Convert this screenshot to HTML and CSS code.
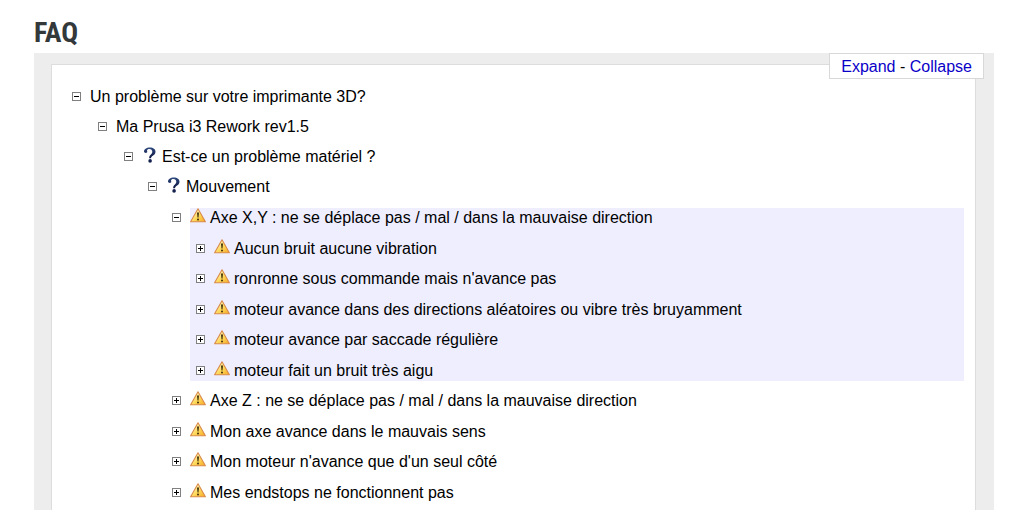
FILE: index.html
```html
<!DOCTYPE html>
<html lang="fr">
<head>
    <meta charset="UTF-8">
    <meta name="viewport" content="width=device-width, initial-scale=1.0">
    <title>FAQ</title>
    <link rel="stylesheet" href="styles.css">
</head>
<body>
    <!-- Shared icons -->
    <svg class="sprite" aria-hidden="true">
        <defs>
            <linearGradient id="amber" x1="0" y1="0" x2="1" y2="1">
                <stop offset="0.2" stop-color="#fff8c0"/>
                <stop offset="0.55" stop-color="#ffd95a"/>
                <stop offset="1" stop-color="#f5a623"/>
            </linearGradient>
            <linearGradient id="navy" x1="0" y1="0" x2="0" y2="1">
                <stop offset="0" stop-color="#2f4a80"/>
                <stop offset="1" stop-color="#0c1640"/>
            </linearGradient>
        </defs>
        <symbol id="warning" viewBox="0 0 16 16">
            <path d="M8 .8 15.4 13.8H.6Z" fill="url(#amber)" stroke="#d98a4a" stroke-width="1.1" stroke-linejoin="round"/>
            <path d="M7 4.6h2l-.5 5h-1z" fill="#40300c"/>
            <circle cx="8" cy="11.6" r="1" fill="#40300c"/>
        </symbol>
        <symbol id="question" viewBox="0 0 16 16">
            <path d="M2 4.6C2 2 4.4.4 7.8.4c3.6 0 5.7 1.7 5.7 4.4 0 2-1.3 3-2.7 4-1.2.8-1.7 1.4-1.8 2.4H7.2c-.1-1.8.6-2.8 1.7-3.8.9-.8 1.4-1.5 1.4-2.7 0-1.7-1.1-2.8-2.9-2.8-1.4 0-2.4.7-2.4 1.6 0 .5.3.8.3 1.3 0 .7-.6 1.1-1.5 1.1S2 5.4 2 4.6z" fill="url(#navy)"/>
            <circle cx="8.1" cy="13.9" r="1.8" fill="#14204e"/>
        </symbol>
    </svg>

    <div class="container">
        <h1>FAQ</h1>
        <div class="faq">
            <div class="controls">
                <a href="#" id="expand">Expand</a> - <a href="#" id="collapse">Collapse</a>
            </div>
            <ul class="tree">
                <li class="node open">
                    <button type="button" class="toggle" aria-label="Un problème sur votre imprimante 3D?"></button>
                    <div class="content">
                        <div class="label">Un problème sur votre imprimante 3D?</div>
                        <ul class="section">
                            <li class="node open">
                                <button type="button" class="toggle" aria-label="Ma Prusa i3 Rework rev1.5"></button>
                                <div class="content">
                                    <div class="label">Ma Prusa i3 Rework rev1.5</div>
                                    <ul class="section">
                                        <li class="node open">
                                            <button type="button" class="toggle" aria-label="Est-ce un problème matériel ?"></button>
                                            <div class="content">
                                                <div class="label"><svg class="icon"><use href="#question"/></svg>Est-ce un problème matériel ?</div>
                                                <ul>
                                                    <li class="node open">
                                                        <button type="button" class="toggle" aria-label="Mouvement"></button>
                                                        <div class="content">
                                                            <div class="label"><svg class="icon"><use href="#question"/></svg>Mouvement</div>
                                                            <ul class="issues">
                                                                <li class="node open">
                                                                    <button type="button" class="toggle" aria-label="Axe X,Y"></button>
                                                                    <div class="content selected">
                                                                        <div class="label"><svg class="icon"><use href="#warning"/></svg>Axe X,Y : ne se déplace pas / mal / dans la mauvaise direction</div>
                                                                        <ul class="issues">
                                                                            <li class="node">
                                                                                <button type="button" class="toggle" aria-label="Aucun bruit"></button>
                                                                                <div class="label"><svg class="icon"><use href="#warning"/></svg>Aucun bruit aucune vibration</div>
                                                                            </li>
                                                                            <li class="node">
                                                                                <button type="button" class="toggle" aria-label="Ronronne"></button>
                                                                                <div class="label"><svg class="icon"><use href="#warning"/></svg>ronronne sous commande mais n'avance pas</div>
                                                                            </li>
                                                                            <li class="node">
                                                                                <button type="button" class="toggle" aria-label="Directions aléatoires"></button>
                                                                                <div class="label"><svg class="icon"><use href="#warning"/></svg>moteur avance dans des directions aléatoires ou vibre très bruyamment</div>
                                                                            </li>
                                                                            <li class="node">
                                                                                <button type="button" class="toggle" aria-label="Saccade régulière"></button>
                                                                                <div class="label"><svg class="icon"><use href="#warning"/></svg>moteur avance par saccade régulière</div>
                                                                            </li>
                                                                            <li class="node">
                                                                                <button type="button" class="toggle" aria-label="Bruit très aigu"></button>
                                                                                <div class="label"><svg class="icon"><use href="#warning"/></svg>moteur fait un bruit très aigu</div>
                                                                            </li>
                                                                        </ul>
                                                                    </div>
                                                                </li>
                                                                <li class="node">
                                                                    <button type="button" class="toggle" aria-label="Axe Z"></button>
                                                                    <div class="label"><svg class="icon"><use href="#warning"/></svg>Axe Z : ne se déplace pas / mal / dans la mauvaise direction</div>
                                                                </li>
                                                                <li class="node">
                                                                    <button type="button" class="toggle" aria-label="Mauvais sens"></button>
                                                                    <div class="label"><svg class="icon"><use href="#warning"/></svg>Mon axe avance dans le mauvais sens</div>
                                                                </li>
                                                                <li class="node">
                                                                    <button type="button" class="toggle" aria-label="Un seul côté"></button>
                                                                    <div class="label"><svg class="icon"><use href="#warning"/></svg>Mon moteur n'avance que d'un seul côté</div>
                                                                </li>
                                                                <li class="node">
                                                                    <button type="button" class="toggle" aria-label="Endstops"></button>
                                                                    <div class="label"><svg class="icon"><use href="#warning"/></svg>Mes endstops ne fonctionnent pas</div>
                                                                </li>
                                                            </ul>
                                                        </div>
                                                    </li>
                                                </ul>
                                            </div>
                                        </li>
                                    </ul>
                                </div>
                            </li>
                        </ul>
                    </div>
                </li>
            </ul>
        </div>
    </div>

    <script>
        const nodes = document.querySelectorAll(".node");

        // Open or close a single branch
        nodes.forEach((node) => {
            node.querySelector(".toggle").addEventListener("click", () => {
                node.classList.toggle("open");
            });
        });

        function setAll(event, open) {
            event.preventDefault();
            nodes.forEach((node) => node.classList.toggle("open", open));
        }

        document.getElementById("expand").addEventListener("click", (event) => setAll(event, true));
        document.getElementById("collapse").addEventListener("click", (event) => setAll(event, false));
    </script>
</body>
</html>
```
FILE: styles.css
```css
* {
    margin: 0;
    padding: 0;
    box-sizing: border-box;
}

html {
    scrollbar-width: none;
}

body {
    font-family: "Liberation Sans", Arial, sans-serif;
    font-size: 16px;
    line-height: 20px;
    background-color: #fff;
    color: #000;
}

.sprite {
    position: absolute;
    width: 0;
    height: 0;
}

.container {
    padding: 12px 33px 0 34px;
}

h1 {
    font-family: "Roboto Condensed", "Liberation Sans Narrow", "Open Sans Condensed", Roboto, sans-serif;
    font-size: 28px;
    line-height: 41px;
    color: #33383a;
}

/* Grey frame around the tree */
.faq {
    position: relative;
    padding: 11px 18px 17px 17px;
    background-color: #ededed;
}

/* Sits over the top right corner of the tree */
.controls {
    position: absolute;
    top: 0;
    right: 10px;
    padding: 3px 11px 1px;
    border: 1px solid #d8d8d8;
    background-color: #fff;
}

.controls a {
    color: #0a00c8;
    text-decoration: none;
}

.controls a:hover {
    text-decoration: underline;
}

ul {
    list-style: none;
}

.tree {
    padding: 22px 11px 20px 20px;
    border: 1px solid #ddd;
    background-color: #fff;
}

.node {
    display: grid;
    grid-template-columns: 18px 1fr;
}

.node ul {
    display: none;
    padding-left: 6px;
}

.node .section {
    padding-left: 8px;
}

.node.open > .content > ul {
    display: block;
}

.node .node {
    margin-top: 10px;
}

.issues > .node:nth-child(odd) {
    margin-top: 11px;
}

.label {
    display: flex;
    gap: 4px;
}

.icon {
    flex: none;
    width: 16px;
    height: 16px;
}

.selected {
    background-color: #eeeeff;
}

/* Plus / minus box */
.toggle {
    width: 9px;
    height: 9px;
    margin-top: 5px;
    border: 1px solid #808080;
    background: linear-gradient(#000, #000) center / 5px 1px no-repeat,
                linear-gradient(#000, #000) center / 1px 5px no-repeat, #fff;
    cursor: pointer;
}

.open > .toggle {
    background: linear-gradient(#000, #000) center / 5px 1px no-repeat, #fff;
}
```
